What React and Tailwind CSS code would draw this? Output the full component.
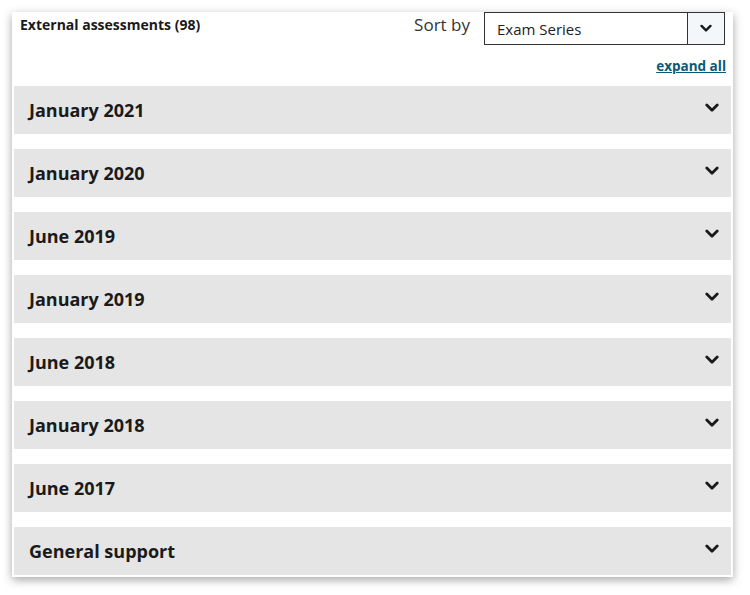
const rows = [
  "January 2021",
  "January 2020",
  "June 2019",
  "January 2019",
  "June 2018",
  "January 2018",
  "June 2017",
  "General support",
]

function Chevron({ className }) {
  return (
    <svg viewBox="0 0 14 10" width="14" height="10" className={className}>
      <polyline points="1.8,2 7,7.2 12.2,2" fill="none" stroke="currentColor" strokeWidth="2.8" strokeLinecap="round" strokeLinejoin="round" />
    </svg>
  )
}

export default function App() {
  return (
    <div className="min-h-[595px] w-[750px] bg-white pt-[12px] pl-[12px] font-['Open_Sans',sans-serif]">
      <div className="flex h-[565px] w-[721px] flex-col bg-white px-[2px] shadow-[0_3px_9px_rgba(0,0,0,0.35)]">
        <div className="flex items-start justify-between">
          <h2 className="pl-[6px] pt-[2px] text-[14px] font-bold text-[#1a1a1a]">External assessments (98)</h2>
          <div className="mr-[6px] flex items-start">
            <span className="mr-[14px] text-[17px] text-[#333]">Sort by</span>
            <div className="flex h-[33px] w-[241px] border border-[#333] bg-white">
              <span className="flex flex-1 items-center pl-[12px] pt-[1px] text-[15px] text-[#222]">Exam Series</span>
              <span className="flex w-[37px] items-center justify-center border-l border-[#333] bg-[#f4f7f9] text-[#1a1a1a]">
                <Chevron className="h-[9px] w-[12px]" />
              </span>
            </div>
          </div>
        </div>
        <div className="flex justify-end pr-[5px] pt-[12px]">
          <a href="#" className="text-[13.5px] font-bold leading-[18px] text-[#0b5a75] underline">
            expand all
          </a>
        </div>
        <div className="mt-[11px] flex flex-col gap-[15px]">
          {rows.map((r) => (
            <div key={r} className="flex h-[48px] items-center justify-between bg-[#e5e5e5] pl-[15px] pr-[12px]">
              <span className="text-[18px] font-bold text-[#1a1a1a]">{r}</span>
              <Chevron className="mb-[4px] text-[#1a1a1a]" />
            </div>
          ))}
        </div>
      </div>
    </div>
  )
}
